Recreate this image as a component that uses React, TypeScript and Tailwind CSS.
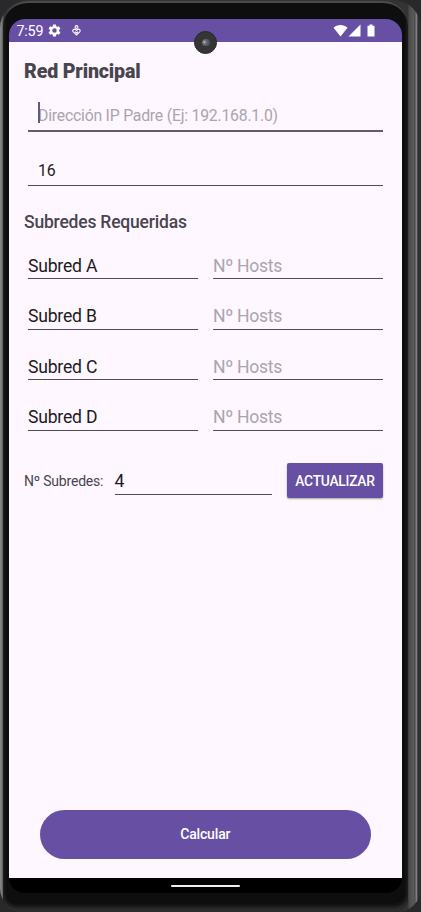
import type { ReactNode } from 'react';

function StatusBar() {
  return (
    <header className="relative flex h-[23px] shrink-0 items-center bg-[#6750a4] text-white">
      <span className="ml-[7.500px] w-[27px] pt-px text-[14.300px] leading-[22px] tracking-[-0.2px]">7:59</span>
      <svg className="ml-[3.500px] h-[15px] w-[15px]" viewBox="0 0 24 24" fill="currentColor">
        <path d="M19.14 12.94c.04-.3.06-.61.06-.94 0-.32-.02-.64-.07-.94l2.03-1.58a.49.49 0 0 0 .12-.61l-1.92-3.32a.49.49 0 0 0-.59-.22l-2.39.96c-.5-.38-1.03-.7-1.62-.94l-.36-2.54a.48.48 0 0 0-.48-.41h-3.84c-.24 0-.43.17-.47.41l-.36 2.54c-.59.24-1.13.57-1.62.94l-2.39-.96a.49.49 0 0 0-.59.22L2.74 8.87c-.12.21-.08.47.12.61l2.03 1.58c-.05.3-.09.63-.09.94s.02.64.07.94l-2.03 1.58a.49.49 0 0 0-.12.61l1.92 3.32c.12.22.37.29.59.22l2.39-.96c.5.38 1.03.7 1.62.94l.36 2.54c.05.24.24.41.48.41h3.84c.24 0 .44-.17.47-.41l.36-2.54c.59-.24 1.13-.56 1.62-.94l2.39.96c.22.08.47 0 .59-.22l1.92-3.32a.49.49 0 0 0-.12-.61l-2.01-1.58zM12 15.6A3.6 3.6 0 1 1 12 8.4a3.6 3.6 0 0 1 0 7.2z" />
      </svg>
      <svg className="ml-[9.500px] h-[11px] w-[9px]" viewBox="0 0 9 11" fill="none" stroke="currentColor" strokeWidth="1.1">
        <circle cx="4.5" cy="2" r="1.4" />
        <path d="M4.5 9.9 1.3 6.9A1.6 1.6 0 0 1 3.6 4.6l.9.9.9-.9a1.6 1.6 0 0 1 2.3 2.3z" />
        <path d="m3 6.7 1.5 1.4L6 6.7" />
      </svg>
      <svg className="ml-auto mr-[27px] h-[14px] w-[42px]" viewBox="0 0 42 14" fill="currentColor">
        <path d="M0.5 3.7C4.300.100 10.700.100 14.500 3.700L7.500 12.500z" />
        <path d="M27.500.500v12H15.500z" />
        <path d="M36.500.500h3v1.300h2v10.700h-7V1.800h2z" />
      </svg>
      <div className="absolute left-[185px] top-[12px] flex h-[23px] w-[23px] items-center justify-center rounded-full border border-[#292929] bg-[#353535]">
        <div className="h-[7px] w-[8px] rounded-full bg-[radial-gradient(circle_at_30%_45%,#d9cfd5_0%,#77717b_22%,#55556a_60%,#454448_100%)]" />
      </div>
    </header>
  );
}

function Field({ className, children }: { className: string; children: ReactNode }) {
  return <div className={`flex items-center border-b border-[#514d55] whitespace-nowrap ${className}`}>{children}</div>;
}

function SubnetRow({ name }: { name: string }) {
  return (
    <div className="flex h-[50.6px] gap-[15px] text-[17.6px] leading-[20px]">
      <Field className="h-[28px] w-[170px] pt-[2px] tracking-[-0.22px] text-[#1d1b20]">{name}</Field>
      <Field className="h-[28px] w-[170px] pt-[2px] tracking-[-0.3px] text-[#aaa5ad]">Nº Hosts</Field>
    </div>
  );
}

export default function App() {
  return (
    <div className="h-[912px] w-[421px] overflow-hidden bg-[#29292b] font-['Roboto',sans-serif]">
      <div className="h-[912px] w-[421px] rounded-t-[28px] rounded-b-[24px] bg-[linear-gradient(to_right,#888_0,#777_2px,#333_4px,#333_408px,#4b4b4b_409px,#5a5a5a_414px,#424242_415px,#858585_416px,#777_417px,#222_418px,#383838_419px,#242424_421px)] pl-[3px] pr-[13px] pt-px">
        <div className="h-[911px] rounded-t-[25px] rounded-b-[14px] border-t-2 border-[#4a4c4b] bg-[#0e0e0e] pl-[6px] pr-[6px] pt-[16px] shadow-[inset_0_-5px_4px_#303030]">
          <div className="flex h-[874px] w-[393px] flex-col overflow-hidden rounded-[16px] bg-black">
            <StatusBar />
            <main className="flex h-[836px] flex-col bg-[#fef7ff] pl-[15px] pr-[19px] pt-[17px] text-[#49454f]">
              <h1 className="h-[24px] pt-px text-[19.6px] leading-[24px] font-black tracking-[-0.15px]">Red Principal</h1>
              <Field className="ml-[4px] mt-[16px] h-[33px] border-b-2 border-[#625b76] pl-[10px] text-[15.8px] tracking-[-0.22px] text-[#aaa5ad]">
                <span className="-mr-[1.5px] h-[21px] w-[1.5px] -translate-y-[2px] bg-[#625b76]" />
                <span className="pt-[2px]">Dirección IP Padre (Ej: 192.168.1.0)</span>
              </Field>
              <Field className="ml-[4px] mt-[22px] h-[32px] pl-[10px] pt-[3px] text-[15.8px] tracking-[-0.22px] text-[#1d1b20]">16</Field>
              <h2 className="mt-[23px] h-[25px] pt-px text-[17.5px] leading-[24px] font-medium tracking-[-0.2px]">Subredes Requeridas</h2>
              <div className="ml-[4px] mt-[17px]">
                {['A', 'B', 'C', 'D'].map((letter) => (
                  <SubnetRow key={letter} name={`Subred ${letter}`} />
                ))}
              </div>
              <div className="mt-[10px] flex h-[35px] shrink-0">
                <span className="w-[90.500px] text-[14px] leading-[36px] tracking-[-0.2px]">Nº Subredes:</span>
                <Field className="mt-[4px] h-[28px] w-[157.500px] text-[17.6px] text-[#1d1b20]">4</Field>
                <button className="ml-[15px] h-[35px] w-[96px] rounded-[2px] bg-[#6750a4] text-[13.8px] font-medium tracking-[-0.25px] text-white shadow-[0_1px_2px_rgba(0,0,0,0.35)]">
                  ACTUALIZAR
                </button>
              </div>
              <button className="mt-auto mr-[12px] mb-[19px] ml-[15.500px] h-[49px] shrink-0 rounded-full bg-[#6750a4] text-[14px] font-medium tracking-[-0.15px] text-white">
                Calcular
              </button>
            </main>
            <div className="flex h-[15px] items-center justify-center bg-black">
              <div className="h-[2px] w-[69px] rounded-full bg-[#eee]" />
            </div>
          </div>
        </div>
      </div>
    </div>
  );
}
